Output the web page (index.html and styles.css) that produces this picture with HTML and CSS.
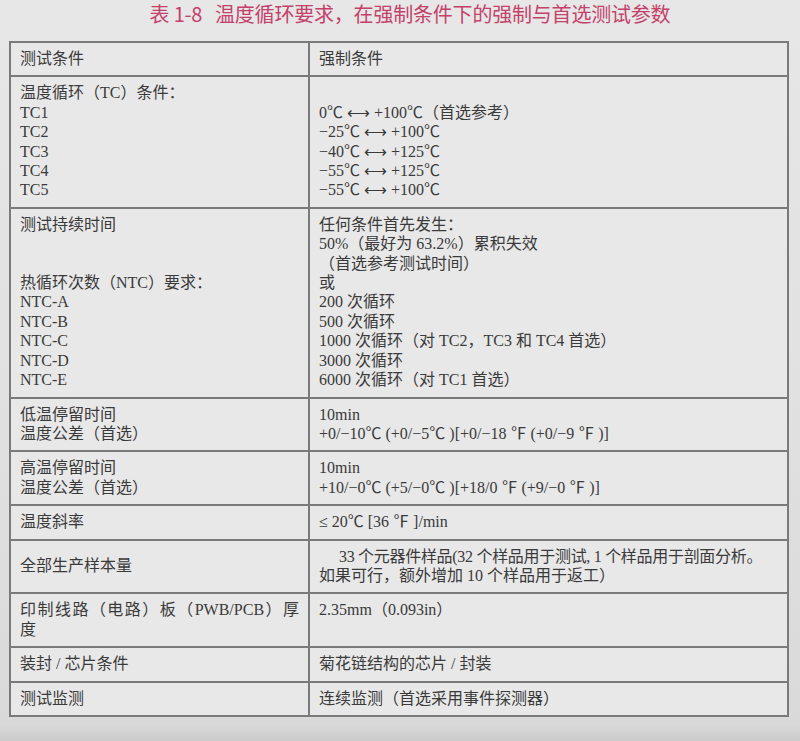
FILE: index.html
```html
<!DOCTYPE html>
<html lang="zh-CN">
<head>
<meta charset="utf-8">
<title>表 1-8</title>
<link rel="stylesheet" href="styles.css">
</head>
<body>
<div class="page">
  <h1 class="title">表 1-8&nbsp;&nbsp;&nbsp;温度循环要求，在强制条件下的强制与首选测试参数</h1>
  <table class="params">
    <colgroup><col class="c1"><col class="c2"></colgroup>
    <tr>
      <td>测试条件</td>
      <td>强制条件</td>
    </tr>
    <tr>
      <td>温度循环（TC）条件：<br>TC1<br>TC2<br>TC3<br>TC4<br>TC5</td>
      <td>&nbsp;<br>0℃ ⟷ +100℃（首选参考）<br>−25℃ ⟷ +100℃<br>−40℃ ⟷ +125℃<br>−55℃ ⟷ +125℃<br>−55℃ ⟷ +100℃</td>
    </tr>
    <tr>
      <td>测试持续时间<br>&nbsp;<br>&nbsp;<br>热循环次数（NTC）要求：<br>NTC-A<br>NTC-B<br>NTC-C<br>NTC-D<br>NTC-E</td>
      <td>任何条件首先发生：<br>50%（最好为 63.2%）累积失效<br>（首选参考测试时间）<br>或<br>200 次循环<br>500 次循环<br>1000 次循环（对 TC2，TC3 和 TC4 首选）<br>3000 次循环<br>6000 次循环（对 TC1 首选）</td>
    </tr>
    <tr>
      <td>低温停留时间<br>温度公差（首选）</td>
      <td>10min<br>+0/−10℃ (+0/−5℃ )[+0/−18 ℉ (+0/−9 ℉ )]</td>
    </tr>
    <tr>
      <td>高温停留时间<br>温度公差（首选）</td>
      <td>10min<br>+10/−0℃ (+5/−0℃ )[+18/0 ℉ (+9/−0 ℉ )]</td>
    </tr>
    <tr>
      <td>温度斜率</td>
      <td>≤ 20℃ [36 ℉ ]/min</td>
    </tr>
    <tr>
      <td class="mid">全部生产样本量</td>
      <td class="nowrap"><span class="indent">33 个元器件样品(32 个样品用于测试, 1 个样品用于剖面分析。</span><br>如果可行，额外增加 10 个样品用于返工）</td>
    </tr>
    <tr>
      <td><span class="just">印制线路（电路）板（PWB/PCB）厚</span>度</td>
      <td>2.35mm（0.093in）</td>
    </tr>
    <tr>
      <td>装封 / 芯片条件</td>
      <td>菊花链结构的芯片 / 封装</td>
    </tr>
    <tr>
      <td>测试监测</td>
      <td>连续监测（首选采用事件探测器）</td>
    </tr>
  </table>
  <div class="bottom"></div>
</div>
</body>
</html>
```

FILE: styles.css
```css
html, body {
  margin: 0;
  padding: 0;
}

body {
  width: 800px;
  height: 741px;
  overflow: hidden;
  background: linear-gradient(180deg, #e7e7e7 0%, #e0e0e0 60%, #d9d9d9 100%);
  color: #3a3a3a;
  font-family: "Liberation Serif", "Noto Sans CJK SC", serif;
}

.page {
  display: flex;
  flex-direction: column;
  height: 741px;
}

.title {
  margin: 0;
  padding-left: 20px;
  height: 41px;
  line-height: 28px;
  text-align: center;
  font-family: "Noto Sans CJK SC", "Liberation Sans", sans-serif;
  font-size: 20px;
  font-weight: 400;
  color: #c4416a;
  letter-spacing: -0.2px;
}

.params {
  margin-left: 9px;
  width: 778px;
  border-collapse: collapse;
  table-layout: fixed;
  background: #e8e8e8;
  border: 2px solid #4e4e4e;
  font-size: 16px;
  line-height: 19.4px;
}

.c1 { width: 299px; }
.c2 { width: 479px; }

.params td {
  border: 2px solid #7a7a7a;
  padding: 6px 9px 7px 9px;
  vertical-align: top;
  text-align: left;
}

.params td.mid {
  vertical-align: middle;
}

.params td.nowrap {
  white-space: nowrap;
}

.indent {
  padding-left: 20px;
  letter-spacing: -0.3px;
}

.just {
  display: block;
  text-align: justify;
  text-align-last: justify;
}

.bottom {
  flex: 1;
  margin-top: 8px;
  background: linear-gradient(180deg, #d8d8d8 0%, #cbcbcb 100%);
}
```
